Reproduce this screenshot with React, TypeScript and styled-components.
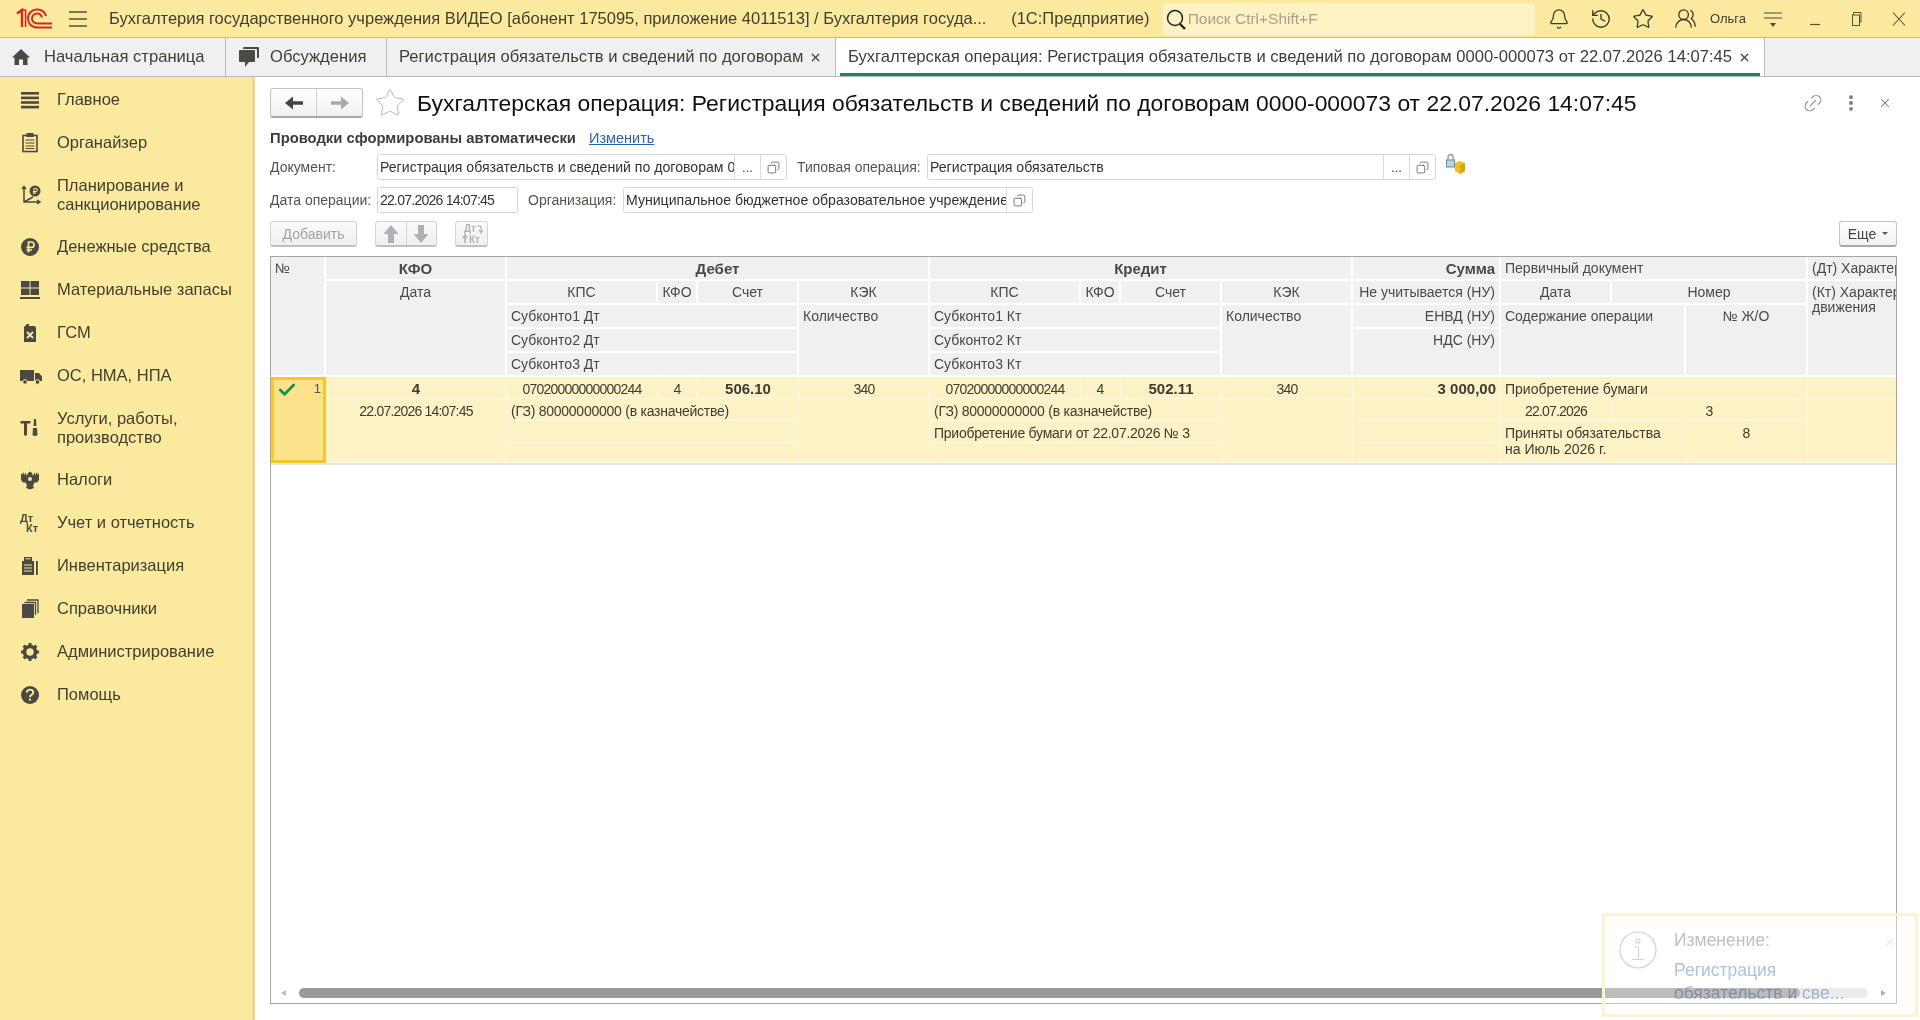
import React from "react";
import styled, { createGlobalStyle } from "styled-components";
import { Bell, History, Star, UsersRound, Link2, MoreVertical, X, Check, Copy } from "lucide-react";

const GlobalStyle = createGlobalStyle`
  html, body { margin: 0; padding: 0; height: 100%; overflow: hidden; background: #fff; }
  * { box-sizing: border-box; }
  body { font-family: "Liberation Sans", Arial, sans-serif; color: #3c3c32; }
`;

const Logo = () => (
  <svg width="38" height="22" viewBox="0 0 38 22" fill="none" stroke="#d52b1e">
    <path d="M1 5.5 L6 2 V19" strokeWidth="2.4" />
    <path d="M6 2 H9.6 V19" strokeWidth="1.6" />
    <path d="M36 19.5 H22 C15 19.5 12 15 12 10.5 C12 5 16 1.5 21 1.5 C26 1.5 29 4.5 30 8" strokeWidth="2" />
    <path d="M36 15.5 H22 C18.5 15.5 16 13.5 16 10.5 C16 7.5 18.5 5.5 21 5.5 C23.5 5.5 25.5 7 26 9.5" strokeWidth="2" />
  </svg>
);

const Burger = () => (
  <svg width="20" height="18" viewBox="0 0 20 18" stroke="#55523a" strokeWidth="1.4">
    <path d="M1 2 H19 M1 9 H19 M1 16 H19" />
  </svg>
);

const HomeIcon = () => (
  <svg width="18" height="18" viewBox="0 0 18 18" fill="#4a4a44">
    <path d="M9 1 L18 9.5 H15.5 V17 H11 V11.5 H7 V17 H2.5 V9.5 H0 Z" />
  </svg>
);

const ChatIcon = () => (
  <svg width="22" height="22" viewBox="0 0 22 22" fill="#4a4a44">
    <path d="M6 1 H20 Q21 1 21 2 V11 Q21 12 20 12 H19 V4 Q19 3 18 3 H5 V2 Q5 1 6 1 Z" />
    <path d="M2 4 H16 Q17 4 17 5 V15 Q17 16 16 16 H11 L7 21 V16 H2 Q1 16 1 15 V5 Q1 4 2 4 Z" />
  </svg>
);

// толстая стрелка, рисуется вправо и поворачивается
const FatArrow = ({ color, turn = 0, thin }: { color: string; turn?: number; thin?: boolean }) => (
  <svg width="20" height="20" viewBox="0 0 20 20" fill={color} style={{ transform: `rotate(${turn}deg)` }}>
    {thin ? (
      <path d="M1 8.2 H11 V3.5 L19 10 L11 16.5 V11.8 H1 Z" />
    ) : (
      <path d="M1 7 H10 V2.5 L19 10 L10 17.5 V13 H1 Z" />
    )}
  </svg>
);

const MenuGlyph = ({ name }: { name: string }) => {
  switch (name) {
    case "main":
      return (
        <svg width="20" height="20" viewBox="0 0 20 20" fill="#4a4a40">
          <rect x="1" y="2" width="18" height="2.6" />
          <rect x="1" y="6.6" width="18" height="2.6" />
          <rect x="1" y="11.2" width="18" height="2.6" />
          <rect x="1" y="15.8" width="18" height="2.6" />
        </svg>
      );
    case "org":
      return (
        <svg width="20" height="20" viewBox="0 0 20 20" fill="none" stroke="#4a4a40">
          <rect x="3" y="2.5" width="14" height="16" strokeWidth="1.6" />
          <rect x="7" y="0.5" width="6" height="3" fill="#4a4a40" />
          <path d="M5.5 7 H14.5 M5.5 10 H14.5 M5.5 13 H14.5 M5.5 15.5 H14.5" strokeWidth="1.2" />
        </svg>
      );
    case "plan":
      return (
        <svg width="22" height="22" viewBox="0 0 22 22" fill="none" stroke="#4a4a40" strokeWidth="1.5">
          <path d="M4 3 V18 H19 M2 5 L4 2.5 L6 5 M17 16 L20 18 L17 20 M4 18 L13 13" />
          <circle cx="15" cy="7" r="5.5" fill="#4a4a40" stroke="none" />
          <path d="M14 10 V4.5 H16 Q17.5 4.5 17.5 6 Q17.5 7.5 16 7.5 H13 M13 9 H16" stroke="#fbe99d" strokeWidth="1" />
        </svg>
      );
    case "money":
      return (
        <svg width="20" height="20" viewBox="0 0 20 20">
          <circle cx="10" cy="10" r="9" fill="#4a4a40" />
          <path d="M8.5 15.5 V5 H11.5 Q14 5 14 7.7 Q14 10.4 11.5 10.4 H6.5 M6.5 13 H12" fill="none" stroke="#fbe99d" strokeWidth="1.7" />
        </svg>
      );
    case "stock":
      return (
        <svg width="20" height="20" viewBox="0 0 20 20" fill="#4a4a40">
          <rect x="1" y="1" width="8.5" height="6.5" />
          <rect x="10.5" y="1" width="8.5" height="6.5" />
          <rect x="1" y="8.5" width="8.5" height="6.5" />
          <rect x="10.5" y="8.5" width="8.5" height="6.5" />
          <rect x="0" y="17" width="20" height="2" />
        </svg>
      );
    case "fuel":
      return (
        <svg width="20" height="20" viewBox="0 0 20 20" fill="#4a4a40">
          <path d="M4 4 L7 1 H9 V3 H14 Q16 3 16 5 V19 H4 Z" />
          <path d="M7 9 L13 15 M13 9 L7 15" stroke="#fbe99d" strokeWidth="1.8" />
        </svg>
      );
    case "truck":
      return (
        <svg width="22" height="20" viewBox="0 0 22 20" fill="#4a4a40">
          <path d="M0 4 H14 V15 H0 Z M15 7 H19 L22 10.5 V15 H15 Z" />
          <circle cx="5" cy="16" r="2.3" stroke="#fbe99d" />
          <circle cx="17.5" cy="16" r="2.3" stroke="#fbe99d" />
        </svg>
      );
    case "tools":
      return (
        <svg width="20" height="20" viewBox="0 0 20 20" fill="#4a4a40">
          <path d="M0.5 3 H10.5 V5.5 H7 V17 Q5.5 18.5 4 17 V5.5 H0.5 Z" />
          <path d="M14 1 H16 L16.5 8 H13.5 Z M13 10 H17 L17.5 17 Q15 19 12.5 17 Z" />
        </svg>
      );
    case "tax":
      return (
        <svg width="20" height="20" viewBox="0 0 20 20" fill="#4a4a40">
          <path d="M1 3 L2.5 5 L3 2 L4.5 5 L5.5 2.5 L7 6 L8 3 L10 1.5 L12 3 L13 6 L14.5 2.5 L15.5 5 L17 2 L17.5 5 L19 3 V10 L17 12.5 L14.5 12.5 L13 15.5 L14 18 L10 19.5 L6 18 L7 15.5 L5.5 12.5 L3 12.5 L1 10 Z" />
          <circle cx="10" cy="9" r="2" fill="#fbe99d" />
        </svg>
      );
    case "acc":
      return (
        <svg width="20" height="20" viewBox="0 0 20 20" fill="#4a4a40">
          <text x="0" y="9" fontFamily="Liberation Sans" fontSize="11" fontWeight="700">Дт</text>
          <text x="6" y="19" fontFamily="Liberation Sans" fontSize="11" fontWeight="700">Кт</text>
        </svg>
      );
    case "inv":
      return (
        <svg width="20" height="20" viewBox="0 0 20 20" fill="#4a4a40">
          <path d="M4 1 H12 V5 H14 V19 H2 V5 H4 Z" />
          <rect x="16" y="5" width="1.8" height="14" />
          <path d="M5.5 2.8 H10.5 M4 9 H12 M4 12 H12 M4 15 H12" stroke="#fbe99d" strokeWidth="1" />
        </svg>
      );
    case "ref":
      return (
        <svg width="20" height="20" viewBox="0 0 20 20" fill="#4a4a40">
          <rect x="2" y="5" width="12" height="14" />
          <path d="M4.5 3.5 H15.5 V16 M7 1 H18 V14" fill="none" stroke="#4a4a40" strokeWidth="1.3" />
        </svg>
      );
    case "admin":
      return (
        <svg width="20" height="20" viewBox="0 0 20 20">
          <circle cx="10" cy="10" r="5.5" fill="none" stroke="#4a4a40" strokeWidth="3.6" />
          <path d="M10 1 V19 M1 10 H19 M3.6 3.6 L16.4 16.4 M16.4 3.6 L3.6 16.4" stroke="#4a4a40" strokeWidth="3" strokeDasharray="3.2 11.4 3.4" />
        </svg>
      );
    default:
      return (
        <svg width="20" height="20" viewBox="0 0 20 20">
          <circle cx="10" cy="10" r="9" fill="#4a4a40" />
          <path d="M6.8 7.6 Q7 4.6 10 4.6 Q13.2 4.6 13.2 7.4 Q13.2 9 11.4 9.9 Q10 10.7 10 12.2" fill="none" stroke="#fbe99d" strokeWidth="1.9" />
          <rect x="9" y="13.6" width="2" height="2" fill="#fbe99d" />
        </svg>
      );
  }
};

const LockIcon = () => (
  <svg width="22" height="22" viewBox="0 0 22 22">
    <path d="M3 7 V4 Q3 1.5 5.5 1.5 Q8 1.5 8 4 V7" fill="none" stroke="#7f9fb5" strokeWidth="1.3" />
    <rect x="1.5" y="7" width="8" height="7" fill="#bcd3e2" stroke="#5f8aa5" />
    <path d="M10 10 L15 8 L20 10 V18 L15 21 L10 18 Z" fill="#efc21b" />
    <path d="M15 12 V21 L20 18 V10 Z" fill="#d7a60c" />
  </svg>
);

const DtKtIcon = () => (
  <svg width="24" height="24" viewBox="0 0 24 24" fill="#b4b4b4">
    <text x="4" y="10" fontFamily="Liberation Sans" fontSize="10" fontWeight="700">Дт</text>
    <text x="9" y="21" fontFamily="Liberation Sans" fontSize="10" fontWeight="700">Кт</text>
    <path d="M17 4 H21 V10 M19 8 L21 11 L23 8" fill="none" stroke="#b4b4b4" strokeWidth="1.2" />
    <path d="M5 21 V14 M3 16 L5 13 L7 16" fill="none" stroke="#b4b4b4" strokeWidth="1.6" />
  </svg>
);

const CopyGlyph = () => <Copy size={13} strokeWidth={1.3} style={{ transform: "scaleX(-1)" }} />;

const menu = [
  { icon: "main", text: "Главное" },
  { icon: "org", text: "Органайзер" },
  { icon: "plan", text: "Планирование и санкционирование" },
  { icon: "money", text: "Денежные средства" },
  { icon: "stock", text: "Материальные запасы" },
  { icon: "fuel", text: "ГСМ" },
  { icon: "truck", text: "ОС, НМА, НПА" },
  { icon: "tools", text: "Услуги, работы, производство" },
  { icon: "tax", text: "Налоги" },
  { icon: "acc", text: "Учет и отчетность" },
  { icon: "inv", text: "Инвентаризация" },
  { icon: "ref", text: "Справочники" },
  { icon: "admin", text: "Администрирование" },
  { icon: "help", text: "Помощь" },
];

type CellDef = {
  c: string;
  r: string;
  t?: string;
  a?: "left" | "center" | "right";
  b?: boolean;
  n?: number;
};

const debitCredit = (start: number, sign: string): CellDef[] => [
  { c: `${start}/${start + 1}`, r: "2", t: "КПС", a: "center" },
  { c: `${start + 1}/${start + 2}`, r: "2", t: "КФО", a: "center" },
  { c: `${start + 2}/${start + 3}`, r: "2", t: "Счет", a: "center" },
  { c: `${start + 3}/${start + 4}`, r: "2", t: "КЭК", a: "center" },
  { c: `${start}/${start + 3}`, r: "3", t: `Субконто1 ${sign}` },
  { c: `${start}/${start + 3}`, r: "4", t: `Субконто2 ${sign}` },
  { c: `${start}/${start + 3}`, r: "5", t: `Субконто3 ${sign}` },
  { c: `${start + 3}/${start + 4}`, r: "3/6", t: "Количество" },
];

const headCells: CellDef[] = [
  { c: "1", r: "1/6", t: "№" },
  { c: "2", r: "1", t: "КФО", a: "center", b: true },
  { c: "2", r: "2/6", t: "Дата", a: "center" },
  { c: "3/7", r: "1", t: "Дебет", a: "center", b: true },
  ...debitCredit(3, "Дт"),
  { c: "7/11", r: "1", t: "Кредит", a: "center", b: true },
  ...debitCredit(7, "Кт"),
  { c: "11", r: "1", t: "Сумма", a: "right", b: true },
  { c: "11", r: "2", t: "Не учитывается (НУ)", a: "right" },
  { c: "11", r: "3", t: "ЕНВД (НУ)", a: "right" },
  { c: "11", r: "4/6", t: "НДС (НУ)", a: "right" },
  { c: "12/15", r: "1", t: "Первичный документ" },
  { c: "12", r: "2", t: "Дата", a: "center" },
  { c: "13/15", r: "2", t: "Номер", a: "center" },
  { c: "12/14", r: "3/6", t: "Содержание операции" },
  { c: "14", r: "3/6", t: "№ Ж/О", a: "center" },
  { c: "15", r: "1", t: "(Дт) Характер движения" },
  { c: "15", r: "2/6", t: "(Кт) Характер движения" },
];

const entrySide = (start: number, account: string, second: string): CellDef[] => [
  { c: `${start}`, r: "6", t: "07020000000000244", a: "center", n: -0.8 },
  { c: `${start + 1}`, r: "6", t: "4", a: "center" },
  { c: `${start + 2}`, r: "6", t: account, a: "center", b: true },
  { c: `${start + 3}`, r: "6", t: "340", a: "center", n: -0.8 },
  { c: `${start}/${start + 3}`, r: "7", t: "(ГЗ) 80000000000 (в казначействе)", n: -0.25 },
  { c: `${start}/${start + 3}`, r: "8", t: second, n: -0.25 },
  { c: `${start}/${start + 3}`, r: "9" },
  { c: `${start + 3}`, r: "7/10" },
];

const rowCells: CellDef[] = [
  { c: "2", r: "6", t: "4", a: "center", b: true },
  { c: "2", r: "7/10", t: "22.07.2026 14:07:45", a: "center", n: -0.8 },
  ...entrySide(3, "506.10", ""),
  ...entrySide(7, "502.11", "Приобретение бумаги от 22.07.2026 № 3"),
  { c: "11", r: "6", t: "3 000,00", a: "right", b: true },
  { c: "11", r: "7" },
  { c: "11", r: "8" },
  { c: "11", r: "9" },
  { c: "12/15", r: "6", t: "Приобретение бумаги" },
  { c: "12", r: "7", t: "22.07.2026", a: "center", n: -0.8 },
  { c: "13/15", r: "7", t: "3", a: "center" },
  { c: "12/14", r: "8/10", t: "Приняты обязательства\nна Июль 2026 г." },
  { c: "14", r: "8/10", t: "8", a: "center" },
  { c: "15", r: "6" },
  { c: "15", r: "7/10" },
];

export default function App() {
  return (
    <Page>
      <GlobalStyle />
      <TopBar>
        <LogoBox><Logo /></LogoBox>
        <BurgerBox><Burger /></BurgerBox>
        <AppTitle>Бухгалтерия государственного учреждения ВИДЕО [абонент 175095, приложение 4011513] / Бухгалтерия госуда...</AppTitle>
        <AppKind>(1С:Предприятие)</AppKind>
        <SearchBox>
          <svg width="22" height="24" viewBox="0 0 22 24" fill="none" stroke="#222">
            <circle cx="10" cy="11" r="7.5" strokeWidth="1.5" />
            <path d="M15 17 L20 22" strokeWidth="2.4" />
          </svg>
          <SearchHint>Поиск Ctrl+Shift+F</SearchHint>
        </SearchBox>
        <TopIcons>
          <TopIcon><Bell size={22} strokeWidth={1.4} /></TopIcon>
          <TopIcon><History size={22} strokeWidth={1.5} /></TopIcon>
          <TopIcon><Star size={22} strokeWidth={1.4} /></TopIcon>
          <TopIcon><UsersRound size={23} strokeWidth={1.4} /></TopIcon>
          <UserName>Ольга</UserName>
          <TopIcon>
            <svg width="20" height="20" viewBox="0 0 20 20" stroke="#4a4a40" fill="#4a4a40">
              <path d="M1 4 H19 M1 9 H19" strokeWidth="1.2" />
              <path d="M7 14 H13 L10 18 Z" stroke="none" />
            </svg>
          </TopIcon>
          <TopIcon>
            <svg width="14" height="14" viewBox="0 0 14 14" stroke="#55523a"><path d="M2 12.5 H12" strokeWidth="1.2" /></svg>
          </TopIcon>
          <TopIcon>
            <svg width="14" height="16" viewBox="0 0 14 16" fill="none" stroke="#55523a"><path d="M3.5 4 V1.5 H11 V11 H9" /><rect x="2.5" y="4" width="7" height="10.5" /></svg>
          </TopIcon>
          <TopIcon>
            <svg width="16" height="16" viewBox="0 0 16 16" stroke="#55523a"><path d="M2 1.5 L14 14.5 M14 1.5 L2 14.5" strokeWidth="1.1" /></svg>
          </TopIcon>
        </TopIcons>
      </TopBar>

      <TabBar>
        <Tab $w={226}>
          <HomeIcon />
          <TabLabel $gap={14}>Начальная страница</TabLabel>
        </Tab>
        <Tab $w={161}>
          <ChatIcon />
          <TabLabel $gap={10}>Обсуждения</TabLabel>
        </Tab>
        <Tab $w={449}>
          <TabLabel>Регистрация обязательств и сведений по договорам</TabLabel>
          <TabClose><X size={13} strokeWidth={2.4} /></TabClose>
        </Tab>
        <Tab $w={929} $active>
          <TabLabel>Бухгалтерская операция: Регистрация обязательств и сведений по договорам 0000-000073 от 22.07.2026 14:07:45</TabLabel>
          <TabClose><X size={13} strokeWidth={2.4} /></TabClose>
        </Tab>
      </TabBar>

      <Body>
        <Sidebar>
          {menu.map((m) => (
            <MenuItem key={m.icon}>
              <MenuIcon><MenuGlyph name={m.icon} /></MenuIcon>
              <MenuText>{m.text}</MenuText>
            </MenuItem>
          ))}
        </Sidebar>

        <Content>
          <FormHead>
            <NavGroup>
              <NavButton><FatArrow color="#444" turn={180} thin /></NavButton>
              <NavButton $dim><FatArrow color="#aaa" thin /></NavButton>
            </NavGroup>
            <StarBox><Star size={32} strokeWidth={0.7} color="#b0b0b0" /></StarBox>
            <Title>Бухгалтерская операция: Регистрация обязательств и сведений по договорам 0000-000073 от 22.07.2026 14:07:45</Title>
            <HeadTools>
              <Link2 size={22} strokeWidth={1.2} color="#8a8a8a" style={{ transform: "rotate(-45deg)" }} />
              <MoreVertical size={20} strokeWidth={2.6} color="#777" />
              <X size={14} strokeWidth={1.8} color="#777" />
            </HeadTools>
          </FormHead>

          <InfoRow>
            <InfoText>Проводки сформированы автоматически</InfoText>
            <InfoLink>Изменить</InfoLink>
          </InfoRow>

          <FormRow $mt={8}>
            <FieldLabel $w={107}>Документ:</FieldLabel>
            <Field $w={410}>
              <FieldValue>Регистрация обязательств и сведений по договорам 0000-000073 от</FieldValue>
              <FieldBtn>...</FieldBtn>
              <FieldBtn><CopyGlyph /></FieldBtn>
            </Field>
            <FieldLabel $w={130} $ml={10}>Типовая операция:</FieldLabel>
            <Field $w={509}>
              <FieldValue>Регистрация обязательств</FieldValue>
              <FieldBtn>...</FieldBtn>
              <FieldBtn><CopyGlyph /></FieldBtn>
            </Field>
            <LockBox><LockIcon /></LockBox>
          </FormRow>

          <FormRow $mt={7}>
            <FieldLabel $w={107}>Дата операции:</FieldLabel>
            <Field $w={141}><FieldValue $tight>22.07.2026 14:07:45</FieldValue></Field>
            <FieldLabel $w={95} $ml={10}>Организация:</FieldLabel>
            <Field $w={410}>
              <FieldValue>Муниципальное бюджетное образовательное учреждение</FieldValue>
              <FieldBtn><CopyGlyph /></FieldBtn>
            </Field>
          </FormRow>

          <Toolbar>
            <ToolButton $w={87}>Добавить</ToolButton>
            <ToolGroup>
              <ToolGroupBtn><FatArrow color="#a9b3b8" turn={-90} /></ToolGroupBtn>
              <ToolGroupBtn><FatArrow color="#a9b3b8" turn={90} /></ToolGroupBtn>
            </ToolGroup>
            <ToolButton $w={33}><DtKtIcon /></ToolButton>
            <MoreButton>Еще<MoreCaret /></MoreButton>
          </Toolbar>

          <TableFrame>
            <TableGrid>
              {headCells.map((cell, i) => (
                <HeadCell key={i} $c={cell.c} $r={cell.r} $a={cell.a} $b={cell.b}>{cell.t}</HeadCell>
              ))}
              <CurrentCell>
                <Check size={20} strokeWidth={3.4} color="#14944a" />
                <CurrentNum>1</CurrentNum>
              </CurrentCell>
              {rowCells.map((cell, i) => (
                <RowCell key={i} $c={cell.c} $r={cell.r} $a={cell.a} $b={cell.b} $n={cell.n}>{cell.t}</RowCell>
              ))}
            </TableGrid>
            <ScrollBar>
              <ScrollArrow $left />
              <ScrollTrack><ScrollThumb /></ScrollTrack>
              <ScrollArrow />
            </ScrollBar>
          </TableFrame>
        </Content>
      </Body>

      <Toast>
        <ToastIcon>
          <svg width="40" height="40" viewBox="0 0 40 40" fill="none" stroke="#c2d7ea" strokeWidth="1.2">
            <circle cx="20" cy="20" r="18" />
            <circle cx="20" cy="11" r="2" />
            <path d="M16 17 H20.5 V29 M14 29.5 H26" />
          </svg>
        </ToastIcon>
        <ToastBody>
          <ToastTitle>Изменение:</ToastTitle>
          <ToastLink>Регистрация обязательств и све...</ToastLink>
        </ToastBody>
        <ToastClose><X size={12} strokeWidth={1.6} color="#d8d8d8" /></ToastClose>
      </Toast>
    </Page>
  );
}

const Page = styled.div`
  position: relative;
  width: 1920px;
  height: 1020px;
  display: flex;
  flex-direction: column;
  overflow: hidden;
  background: #fff;
`;

const TopBar = styled.header`
  height: 38px;
  flex: none;
  display: flex;
  align-items: center;
  background: #fbe99d;
  border-bottom: 1px solid #cdbf7c;
`;

const LogoBox = styled.div`
  width: 69px;
  padding-left: 16px;
  display: flex;
  align-items: center;
`;

const BurgerBox = styled.div`
  width: 41px;
  display: flex;
  align-items: center;
`;

const AppTitle = styled.div`
  width: 902px;
  padding-right: 0;
  font-size: 16.5px;
  white-space: nowrap;
  overflow: hidden;
  color: #3f3f33;
  margin-right: 9px;
`;

const AppKind = styled.div`
  width: 153px;
  font-size: 16.5px;
  white-space: nowrap;
  color: #3f3f33;
`;

const SearchBox = styled.div`
  width: 376px;
  height: 32px;
  display: flex;
  align-items: center;
  gap: 1px;
  padding-left: 2px;
  background: #fdf2c4;
  border-radius: 3px;
`;

const SearchHint = styled.span`
  font-size: 15.5px;
  color: #a5a28e;
`;

const TopIcons = styled.div`
  display: flex;
  align-items: center;
  margin-left: 3px;
`;

const TopIcon = styled.div`
  width: 42px;
  display: flex;
  justify-content: center;
  align-items: center;
  color: #3a3a30;
`;

const UserName = styled.span`
  width: 42px;
  margin-left: 4px;
  font-size: 13px;
  color: #3f3f33;
`;

const TabBar = styled.nav`
  height: 39px;
  flex: none;
  display: flex;
  background: #f0f0f0;
  border-bottom: 1px solid #b9b9b9;
`;

const Tab = styled.div<{ $w: number; $active?: boolean }>`
  width: ${(p) => p.$w}px;
  display: flex;
  align-items: center;
  padding-left: 12px;
  flex: none;
  border-right: 1px solid #bdbdbd;
  background: ${(p) => (p.$active ? "#fff" : "transparent")};
  box-shadow: ${(p) => (p.$active ? "inset 4px 0 0 #fff, inset -4px 0 0 #fff, inset 0 -3px 0 #0f8a63" : "none")};
`;

const TabLabel = styled.span<{ $gap?: number }>`
  margin-left: ${(p) => p.$gap ?? 0}px;
  font-size: 16.6px;
  white-space: nowrap;
  color: #3f3f38;
`;

const TabClose = styled.span`
  display: flex;
  margin-left: 6px;
  color: #444;
`;

const Body = styled.div`
  flex: 1;
  display: flex;
  min-height: 0;
`;

const Sidebar = styled.aside`
  width: 255px;
  flex: none;
  padding-top: 1px;
  background: #fbe99d;
  border-right: 3px solid #e8d98c;
`;

const MenuItem = styled.div`
  display: flex;
  align-items: center;
  padding: 12px 14px 12px 20px;
  min-height: 43px;
`;

const MenuIcon = styled.div`
  width: 37px;
  height: 19px;
  flex: none;
  display: flex;
  align-items: center;
`;

const MenuText = styled.div`
  font-size: 16.5px;
  line-height: 18.5px;
  color: #3f3f33;
`;

const Content = styled.main`
  flex: 1;
  min-width: 0;
  display: flex;
  flex-direction: column;
  padding: 11px 23px 16px 15px;
`;

const FormHead = styled.div`
  display: flex;
  align-items: center;
  height: 30px;
`;

const NavGroup = styled.div`
  display: flex;
  width: 93px;
  height: 30px;
  border: 1px solid #c4c4c4;
  border-bottom: 2px solid #a8a8a8;
  border-radius: 3px;
  background: linear-gradient(#fff, #f0f0f0);
`;

const NavButton = styled.div<{ $dim?: boolean }>`
  flex: 1;
  display: flex;
  align-items: center;
  justify-content: center;
  border-left: ${(p) => (p.$dim ? "1px solid #cfcfcf" : "none")};
`;

const StarBox = styled.div`
  width: 54px;
  display: flex;
  justify-content: center;
`;

const Title = styled.h1`
  margin: 0;
  flex: 1;
  font-size: 22.9px;
  font-weight: 400;
  white-space: nowrap;
  color: #111;
`;

const HeadTools = styled.div`
  display: flex;
  align-items: center;
  gap: 17px;
  margin-right: 5px;
`;

const InfoRow = styled.div`
  display: flex;
  align-items: center;
  gap: 13px;
  height: 17px;
  margin-top: 11px;
`;

const InfoText = styled.span`
  font-size: 14.8px;
  font-weight: 700;
  color: #3c3c3c;
`;

const InfoLink = styled.span`
  font-size: 14.5px;
  color: #2a63b5;
  text-decoration: underline;
`;

const FormRow = styled.div<{ $mt: number }>`
  display: flex;
  align-items: center;
  height: 26px;
  margin-top: ${(p) => p.$mt}px;
`;

const FieldLabel = styled.span<{ $w: number; $ml?: number }>`
  width: ${(p) => p.$w}px;
  margin-left: ${(p) => p.$ml ?? 0}px;
  flex: none;
  font-size: 14px;
  color: #55554e;
  white-space: nowrap;
`;

const Field = styled.div<{ $w: number }>`
  width: ${(p) => p.$w}px;
  height: 26px;
  flex: none;
  display: flex;
  align-items: center;
  border: 1px solid #d6d6d6;
  border-radius: 3px;
  background: #fff;
`;

const FieldValue = styled.span<{ $tight?: boolean }>`
  flex: 1;
  min-width: 0;
  padding-left: 2px;
  font-size: 14.1px;
  letter-spacing: ${(p) => (p.$tight ? "-0.8px" : "0")};
  color: #333;
  white-space: nowrap;
  overflow: hidden;
`;

const FieldBtn = styled.span`
  width: 26px;
  height: 100%;
  flex: none;
  display: flex;
  align-items: center;
  justify-content: center;
  font-size: 13px;
  color: #444;
  border-left: 1px solid #dcdcdc;
`;

const LockBox = styled.div`
  margin-left: 9px;
  margin-top: -6px;
  display: flex;
`;

const Toolbar = styled.div`
  display: flex;
  align-items: center;
  gap: 18px;
  height: 26px;
  margin-top: 8px;
`;

const ToolButton = styled.div<{ $w: number }>`
  width: ${(p) => p.$w}px;
  height: 26px;
  display: flex;
  align-items: center;
  justify-content: center;
  font-size: 14px;
  color: #a3a3a3;
  border: 1px solid #d4d4d4;
  border-bottom: 2px solid #c0c0c0;
  border-radius: 3px;
  background: linear-gradient(#fbfbfb, #efefef);
`;

const ToolGroup = styled.div`
  display: flex;
  width: 62px;
  height: 26px;
  border: 1px solid #d4d4d4;
  border-bottom: 2px solid #c0c0c0;
  border-radius: 3px;
  background: linear-gradient(#fbfbfb, #efefef);
`;

const ToolGroupBtn = styled.div`
  flex: 1;
  display: flex;
  align-items: center;
  justify-content: center;
  & + & {
    border-left: 1px solid #d4d4d4;
  }
`;

const MoreButton = styled.div`
  width: 58px;
  height: 26px;
  margin-left: auto;
  display: flex;
  align-items: center;
  justify-content: center;
  gap: 6px;
  font-size: 14px;
  color: #444;
  border: 1px solid #c4c4c4;
  border-bottom: 2px solid #a8a8a8;
  border-radius: 3px;
  background: linear-gradient(#fff, #f0f0f0);
`;

const MoreCaret = styled.span`
  border-left: 3px solid transparent;
  border-right: 3px solid transparent;
  border-top: 3px solid #555;
`;

const TableFrame = styled.div`
  flex: 1;
  min-height: 0;
  margin-top: 9px;
  display: flex;
  flex-direction: column;
  border: 1px solid #a6a6a6;
  overflow: hidden;
`;

const TableGrid = styled.div`
  display: grid;
  grid-template-columns: 55px 181px 151px 40px 101px 131px 151px 40px 101px 131px 148px 111px 74px 122px 120px;
  grid-template-rows: repeat(5, 24px) 22px 22px 22px 20px;
  width: 1656px;
  flex: none;
  font-size: 14px;
  border-bottom: 2px solid #e6e6e6;
`;

const BaseCell = styled.div<{ $c: string; $r: string; $a?: string; $b?: boolean; $n?: number }>`
  grid-column: ${(p) => p.$c};
  grid-row: ${(p) => p.$r};
  padding: 4px 4px 0 4px;
  text-align: ${(p) => p.$a ?? "left"};
  font-weight: ${(p) => (p.$b ? 700 : 400)};
  font-size: ${(p) => (p.$b ? "15px" : "14px")};
  letter-spacing: ${(p) => p.$n ?? 0}px;
  line-height: 15px;
  overflow: hidden;
`;

const HeadCell = styled(BaseCell)`
  background: #f0f0f0;
  color: #4a4a44;
  border-right: 2px solid #fff;
  border-bottom: 2px solid #fff;
`;

const RowCell = styled(BaseCell)`
  background: #fdf1c6;
  color: #3c3c32;
  line-height: 16px;
  white-space: pre-line;
  border-right: 1px solid #fef8e4;
  border-bottom: 1px solid #fef8e4;
`;

const CurrentCell = styled.div`
  grid-column: 1;
  grid-row: 6 / 10;
  display: flex;
  justify-content: space-between;
  align-items: flex-start;
  padding: 0 2px 0 3px;
  background: #fce28a;
  border: 3px solid #f3c92f;
  font-size: 13px;
`;

const CurrentNum = styled.span`
  padding-top: 1px;
  color: #55554a;
`;

const ScrollBar = styled.div`
  margin-top: auto;
  height: 14px;
  flex: none;
  display: flex;
  align-items: center;
  margin-bottom: 3px;
  padding: 0 10px;
  gap: 13px;
`;

const ScrollArrow = styled.span<{ $left?: boolean }>`
  flex: none;
  border-top: 3px solid transparent;
  border-bottom: 3px solid transparent;
  border-left: ${(p) => (p.$left ? "none" : "5px solid #888")};
  border-right: ${(p) => (p.$left ? "5px solid #bbb" : "none")};
`;

const ScrollTrack = styled.div`
  flex: 1;
  height: 10px;
  border-radius: 5px;
  background: #e0e0e0;
`;

const ScrollThumb = styled.div`
  width: 1501px;
  height: 100%;
  border-radius: 5px;
  background: #999;
`;

const Toast = styled.aside`
  position: absolute;
  left: 1602px;
  top: 913px;
  width: 316px;
  height: 104px;
  display: flex;
  padding: 14px 0 0 13px;
  background: rgba(255, 255, 255, 0.35);
  border: 3px solid #fbf3d3;
`;

const ToastIcon = styled.div`
  width: 56px;
  flex: none;
`;

const ToastBody = styled.div`
  width: 200px;
`;

const ToastTitle = styled.div`
  font-size: 17.5px;
  line-height: 20px;
  color: #c4c0bb;
`;

const ToastLink = styled.div`
  margin-top: 9px;
  font-size: 17.5px;
  line-height: 23px;
  color: #aec4de;
  mix-blend-mode: multiply;
`;

const ToastClose = styled.div`
  position: absolute;
  right: 19px;
  top: 18px;
`;
